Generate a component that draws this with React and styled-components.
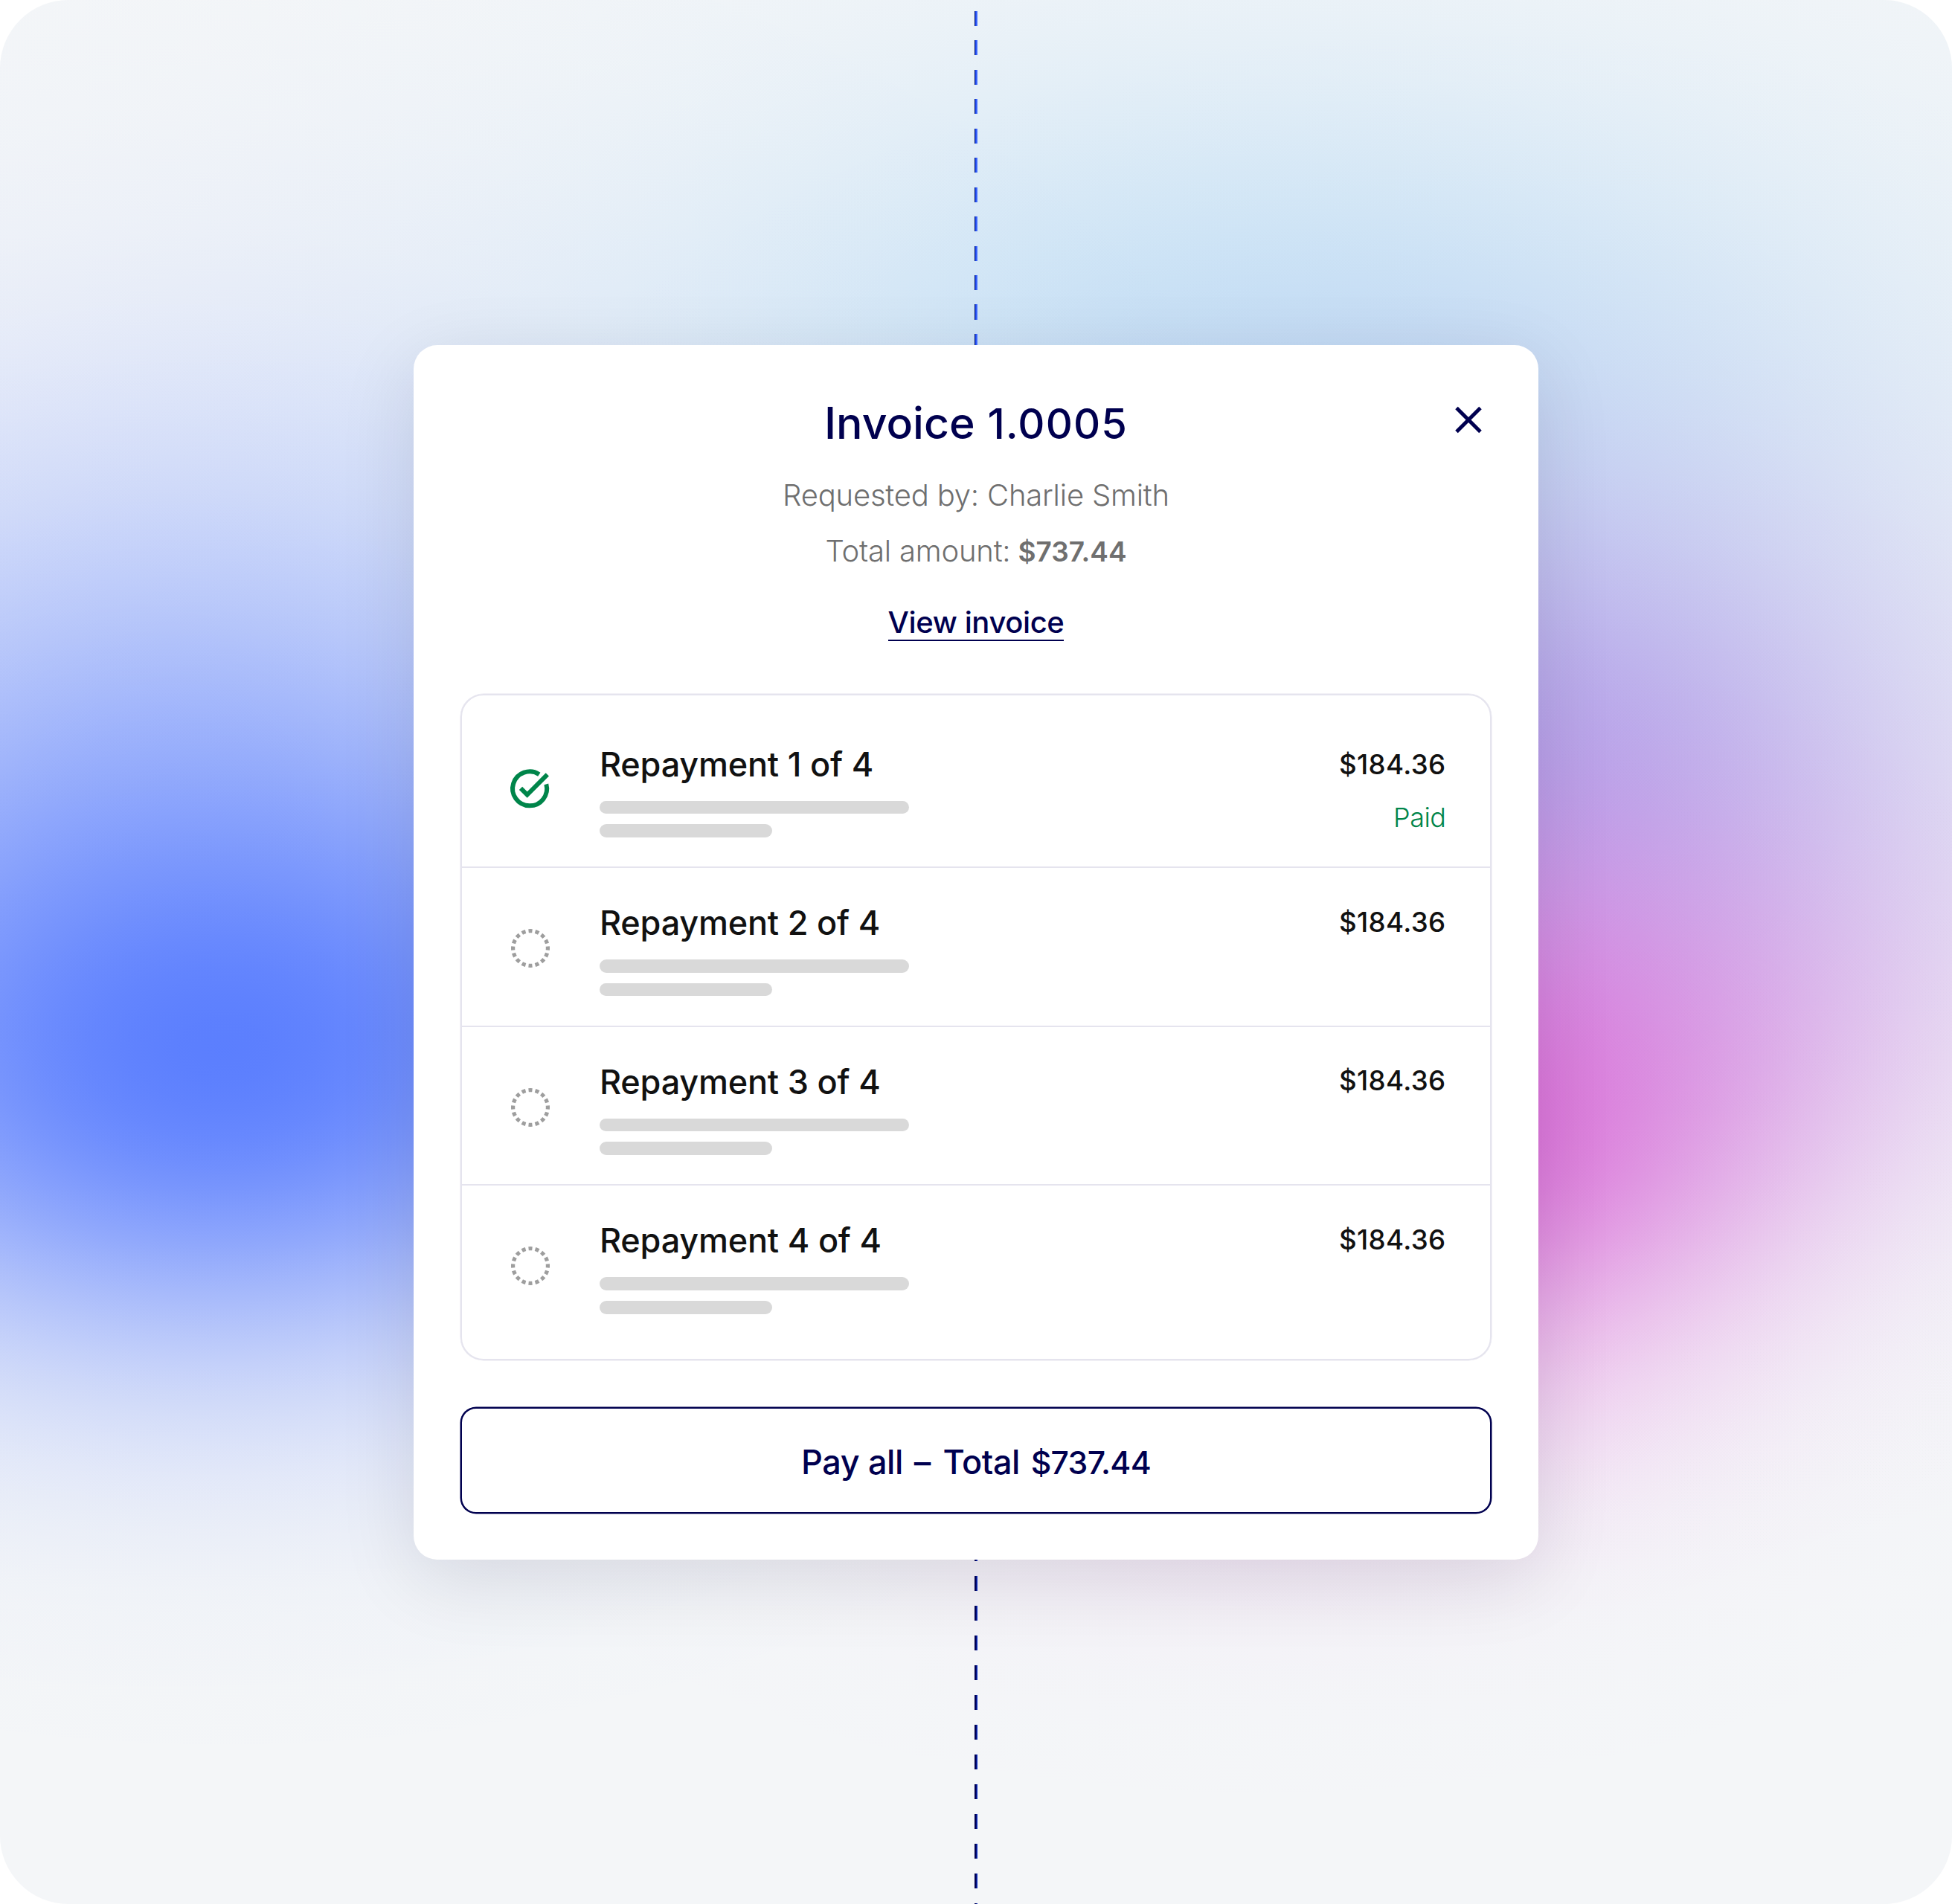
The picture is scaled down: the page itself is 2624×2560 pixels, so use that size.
import React from 'react';
import styled, { createGlobalStyle } from 'styled-components';

const navy = '#00004f';
const green = '#00854a';
const line = '#e5e4ee';

// soft elliptical light: a radial gradient with a gaussian falloff
const glow = (x, y, rx, ry, rgb, alpha) => {
  const reach = 2.6;
  const stops = [];
  for (let i = 0; i <= 26; i++) {
    const r = (i / 26) * reach;
    const a = i === 26 ? 0 : alpha * Math.exp(-r * r);
    stops.push(`rgba(${rgb}, ${a.toFixed(4)}) ${((i / 26) * 100).toFixed(2)}%`);
  }
  return `radial-gradient(ellipse ${rx * reach}px ${ry * reach}px at ${x}px ${y}px, ${stops.join(', ')})`;
};

const backdrop = [
  glow(300, 1415, 600, 380, '79, 117, 255', 0.9),
  glow(230, 1070, 690, 510, '79, 117, 255', 0.39),
  glow(1900, 1520, 400, 270, '218, 100, 212', 0.9),
  glow(1700, 1800, 500, 260, '238, 140, 226', 0.42),
  glow(2050, 1370, 500, 300, '216, 138, 226', 0.62),
  glow(1980, 1050, 600, 410, '172, 156, 232', 0.92),
  glow(1720, 520, 850, 420, '192, 223, 245', 0.9),
].join(', ');

const GlobalStyle = createGlobalStyle`
    body {
        margin: 0;
        background: #ffffff;
        font-family: Inter, "Liberation Sans", Arial, sans-serif;
        font-weight: 500;
    }
    * { box-sizing: border-box; }
`;

const Stage = styled.main`
    display: flex;
    flex-direction: column;
    align-items: center;
    width: 2624px;
    height: 2560px;
    border-radius: 92px;
    background: ${backdrop}, #f4f6f8;
    overflow: hidden;
`;

const DashedLine = styled.div`
    width: 4px;
    height: ${props => props.$height}px;
    background: linear-gradient(90deg, ${props => props.$colors});
    mask-image: repeating-linear-gradient(
        180deg,
        #000 0 20px,
        transparent 20px ${props => props.$period}px
    );
    mask-size: 100% 600px;
    mask-repeat: no-repeat;
    mask-position: 0 ${props => props.$start}px;
`;

const Card = styled.section`
    flex: none;
    width: 1512px;
    height: 1633.4px;
    padding: 0 63px;
    border-radius: 32px;
    background: #ffffff;
    box-shadow: 0 26px 105px rgba(0, 10, 40, 0.11);
`;

const CardHeader = styled.header`
    display: grid;
    grid-template-columns: 60px 1fr 60px;
    height: 469px;
    padding-top: 70px;
`;

const HeaderText = styled.div`
    grid-column: 2;
    display: flex;
    flex-direction: column;
    align-items: center;
    white-space: nowrap;
`;

const Title = styled.h1`
    margin: 0 0 22.5px;
    font-size: 59px;
    font-weight: 500;
    line-height: 70px;
    color: ${navy};
`;

const Figures = styled.span`
    margin-left: ${props => props.$space || 0}px;
    font-size: 0.95em;
    letter-spacing: ${props => props.$spacing || 0}px;
`;

const Detail = styled.p`
    margin: 0;
    font-size: 40px;
    font-weight: 300;
    line-height: 75.7px;
    letter-spacing: -0.2px;
    color: #6f6f6f;

    strong {
        margin-left: -1px;
        font-size: 37px;
        font-weight: 600;
        letter-spacing: 0;
    }
`;

const ViewLink = styled.a`
    margin-top: 34px;
    border-bottom: 2px solid ${navy};
    font-size: 40px;
    line-height: 46px;
    letter-spacing: -0.4px;
    color: ${navy};
    text-decoration: none;
`;

const CloseButton = styled.button`
    width: 40px;
    height: 40px;
    margin: 10px 0 0 9px;
    padding: 0;
    border: none;
    background: none;
`;

const Repayments = styled.ul`
    height: 895.5px;
    margin: 0 0 63.5px;
    padding: 18.5px 0 0;
    border: 2px solid ${line};
    border-radius: 31px;
    box-shadow: 0 0 0 0.5px ${line};
    list-style: none;
`;

const RepaymentRow = styled.li`
    display: grid;
    grid-template-columns: 80px 1fr auto;
    column-gap: 54px;
    height: 213.6px;
    padding: 0 59.5px 0 51px;
    border-bottom: 2.5px solid ${line};

    &:last-child { border-bottom: none; }
`;

const StatusIcon = styled.svg`
    width: 80px;
    height: 80px;
    margin-top: ${props => props.$top}px;
`;

const RowBody = styled.div`
    padding-top: 46px;
`;

const RowTitle = styled.h2`
    margin: 0 0 21px;
    font-size: 45px;
    font-weight: 500;
    line-height: 56px;
    letter-spacing: -0.2px;
    white-space: nowrap;
    color: #111111;
`;

const Placeholder = styled.div`
    width: ${props => props.$width}px;
    height: 17.6px;
    margin-bottom: 14.2px;
    border-radius: 9px;
    background: #d9d9d9;
`;

const RowAmount = styled.div`
    display: flex;
    flex-direction: column;
    align-items: flex-end;
    gap: 27px;
    padding-top: ${props => (props.$paid ? 52.5 : 50.7)}px;
    line-height: 44px;
`;

const Amount = styled.span`
    font-size: 36.7px;
    letter-spacing: 0.35px;
    color: #111111;
`;

const Paid = styled.span`
    font-size: 36px;
    font-weight: 300;
    letter-spacing: -0.5px;
    color: ${green};
`;

const PayButton = styled.button`
    width: 100%;
    height: 143px;
    padding: 4px 0 0;
    border: 2px solid ${navy};
    border-radius: 21px;
    box-shadow: 0 0 0 0.5px ${navy};
    background: #ffffff;
    font: inherit;
    font-size: 45px;
    letter-spacing: -0.37px;
    color: ${navy};
`;

const Dash = styled.span`
    margin: 0 5px 0 3px;
`;

const CheckIcon = () => (
  <StatusIcon $top={66.5} viewBox="0 0 80 80" fill="none" stroke={green} strokeWidth="6">
    <path d="M52.8 21.2A23 23 0 1 0 62.3 34.4" />
    <path d="M28 39.8 36.7 48.6 63.8 21.4" />
  </StatusIcon>
);

const PendingIcon = () => (
  <StatusIcon $top={69} viewBox="0 0 80 80" fill="none" stroke="#9e9e9e" strokeWidth="5.2">
    <circle cx="41" cy="39" r="23.4" pathLength="160" strokeDasharray="5.6 4.4" strokeDashoffset="2.8" />
  </StatusIcon>
);

const repayments = [
  { title: 'Repayment 1 of 4', amount: '$184.36', paid: true },
  { title: 'Repayment 2 of 4', amount: '$184.36' },
  { title: 'Repayment 3 of 4', amount: '$184.36' },
  { title: 'Repayment 4 of 4', amount: '$184.36' },
];

const App = () => (
  <Stage>
    <GlobalStyle />
    <DashedLine $height={464} $start={15} $period={39.45} $colors="#00105f 25%, #1f49f0 25% 50%, #4a74ff 75%" />
    <Card>
      <CardHeader>
        <HeaderText>
          <Title>Invoice <Figures $space={1} $spacing={1.1}>1.0005</Figures></Title>
          <Detail>Requested by: Charlie Smith</Detail>
          <Detail>Total amount: <strong>$737.44</strong></Detail>
          <ViewLink>View invoice</ViewLink>
        </HeaderText>
        <CloseButton aria-label="Close">
          <svg width="40" height="40" viewBox="0 0 40 40" stroke={navy} strokeWidth="5">
            <path d="M4 4.5 36 36.5M36 4.5 4 36.5" />
          </svg>
        </CloseButton>
      </CardHeader>
      <Repayments>
        {repayments.map(item => (
          <RepaymentRow key={item.title}>
            {item.paid ? <CheckIcon /> : <PendingIcon />}
            <RowBody>
              <RowTitle>{item.title}</RowTitle>
              <Placeholder $width={416} />
              <Placeholder $width={232} />
            </RowBody>
            <RowAmount $paid={item.paid}>
              <Amount>{item.amount}</Amount>
              {item.paid && <Paid>Paid</Paid>}
            </RowAmount>
          </RepaymentRow>
        ))}
      </Repayments>
      <PayButton>Pay all <Dash>–</Dash> Total <Figures $space={3} $spacing={-0.7}>$737.44</Figures></PayButton>
    </Card>
    <DashedLine $height={462.6} $start={-18} $period={40} $colors="#000050 50%, #0a2bc0 75%" />
  </Stage>
);

export default App;
